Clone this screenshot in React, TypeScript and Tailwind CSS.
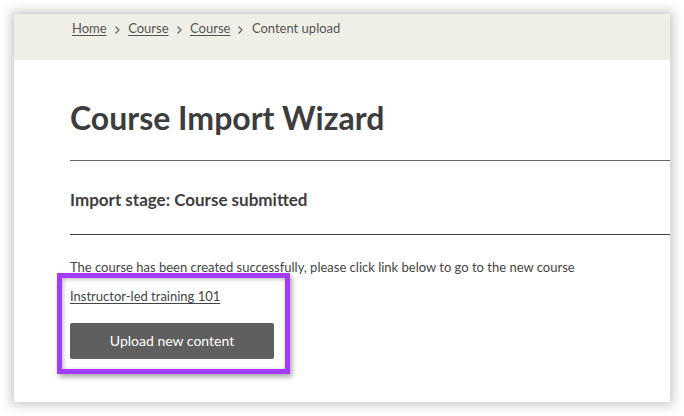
const font = { fontFamily: "Lato, 'Liberation Sans', sans-serif" };

const crumbs = ["Home", "Course", "Course"];

function Chevron() {
  return (
    <svg width="7" height="10" viewBox="0 0 7 10" className="ml-[7px] mr-[7.5px] mt-[3px]" fill="none">
      <path d="M1.5 1.5 L5 5 L1.5 8.5" stroke="#666" strokeWidth="1.2" />
    </svg>
  );
}

export default function App() {
  return (
    <div className="w-[684px] h-[416px] bg-white overflow-hidden pt-[14px] pl-[14px]" style={font}>
      <div className="relative w-[656px] h-[388px] bg-white shadow-[0_0_10px_3px_rgba(0,0,0,0.22)]">
        <div className="h-[46px] bg-[#efefe7] pl-[58px] pt-[6px]">
          <div className="flex items-center text-[13px] leading-[16px] text-[#555]">
            {crumbs.map((c, i) => (
              <span key={i} className="flex items-center">
                <a href="#" className="underline underline-offset-2">{c}</a>
                <Chevron />
              </span>
            ))}
            <span>Content upload</span>
          </div>
        </div>

        <div className="pl-[56px]">
          <h1 className="mt-[38px] text-[32px] leading-[40px] font-bold text-[#3d3d3d]">Course Import Wizard</h1>
          <div className="mt-[22px] h-px bg-[#666]" />
          <h2 className="mt-[27px] text-[17px] leading-[24px] font-bold text-[#3d3d3d]">Import stage: Course submitted</h2>
          <div className="mt-[22px] h-px bg-[#444]" />
          <p className="mt-[23px] text-[13px] leading-[18px] text-[#444]">
            The course has been created successfully, please click link below to go to the new course
          </p>
          <a href="#" className="block mt-[11px] text-[13px] leading-[18px] text-[#444] underline underline-offset-2 w-fit">
            Instructor-led training 101
          </a>
          <button className="mt-[18px] w-[204px] h-[36px] pb-[2px] rounded-[2px] bg-[#5f5f5f] text-white text-[14px]">
            Upload new content
          </button>
        </div>

        <div className="absolute left-[43px] top-[259px] w-[233px] h-[101px] border-[5px] border-[#a23cf6] shadow-[2px_3px_5px_rgba(0,0,0,0.35),inset_1px_1px_4px_rgba(0,0,0,0.3)]" />
      </div>
    </div>
  );
}
